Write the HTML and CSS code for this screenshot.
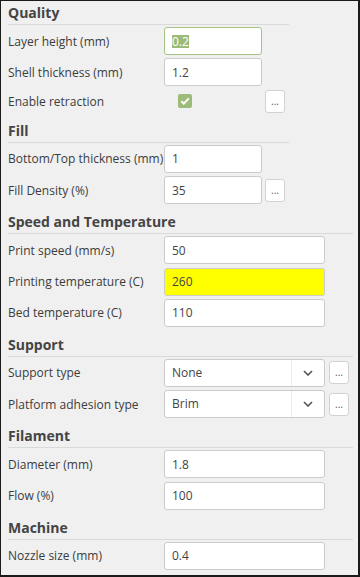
FILE: index.html
```html
<!DOCTYPE html>
<html lang="en">
<head>
    <meta charset="UTF-8">
    <title>Print settings</title>
    <link rel="stylesheet" href="styles.css">
</head>
<body>
    <div class="panel">
        <section class="group narrow">
            <h3>Quality</h3>
            <div class="rows">
                <div class="row">
                    <label>Layer height (mm)</label>
                    <div class="field focused"><span class="selected">0.2</span></div>
                </div>
                <div class="row">
                    <label>Shell thickness (mm)</label>
                    <input class="field" type="text" value="1.2">
                </div>
                <div class="row short">
                    <label>Enable retraction</label>
                    <div class="check">
                        <svg width="10" height="8" viewBox="0 0 10 8"><path d="M1.2 4.2l2.6 2.4L8.8 1.4" fill="none" stroke="#fff" stroke-width="2"/></svg>
                    </div>
                    <button class="more">...</button>
                </div>
            </div>
        </section>

        <section class="group narrow">
            <h3>Fill</h3>
            <div class="rows">
                <div class="row">
                    <label>Bottom/Top thickness (mm)</label>
                    <input class="field" type="text" value="1">
                </div>
                <div class="row">
                    <label>Fill Density (%)</label>
                    <input class="field" type="text" value="35">
                    <button class="more">...</button>
                </div>
            </div>
        </section>

        <section class="group wide">
            <h3>Speed and Temperature</h3>
            <div class="rows">
                <div class="row">
                    <label>Print speed (mm/s)</label>
                    <input class="field" type="text" value="50">
                </div>
                <div class="row">
                    <label>Printing temperature (C)</label>
                    <input class="field warn" type="text" value="260">
                </div>
                <div class="row">
                    <label>Bed temperature (C)</label>
                    <input class="field" type="text" value="110">
                </div>
            </div>
        </section>

        <section class="group wide">
            <h3>Support</h3>
            <div class="rows">
                <div class="row">
                    <label>Support type</label>
                    <div class="select">
                        <span class="select-value">None</span>
                        <span class="select-arrow"><svg width="10" height="6" viewBox="0 0 10 6"><path d="M1 1l4 4 4-4" fill="none" stroke="#555" stroke-width="1.6"/></svg></span>
                    </div>
                    <button class="more">...</button>
                </div>
                <div class="row">
                    <label>Platform adhesion type</label>
                    <div class="select">
                        <span class="select-value">Brim</span>
                        <span class="select-arrow"><svg width="10" height="6" viewBox="0 0 10 6"><path d="M1 1l4 4 4-4" fill="none" stroke="#555" stroke-width="1.6"/></svg></span>
                    </div>
                    <button class="more">...</button>
                </div>
            </div>
        </section>

        <section class="group wide">
            <h3>Filament</h3>
            <div class="rows">
                <div class="row">
                    <label>Diameter (mm)</label>
                    <input class="field" type="text" value="1.8">
                </div>
                <div class="row">
                    <label>Flow (%)</label>
                    <input class="field" type="text" value="100">
                </div>
            </div>
        </section>

        <section class="group wide">
            <h3>Machine</h3>
            <div class="rows">
                <div class="row">
                    <label>Nozzle size (mm)</label>
                    <input class="field" type="text" value="0.4">
                </div>
            </div>
        </section>
    </div>
</body>
</html>
```

FILE: styles.css
```css
body {
    margin: 0;
    background: #f0f0f0;
    font-family: "Open Sans", sans-serif;
    color: #3c3c3c;
}

.panel {
    height: 577px;
    box-sizing: border-box;
    border: 1px solid #1a1a1a;
    border-right-width: 2px;
    border-bottom-width: 2px;
    padding: 2px 0 0 7px;
}

h3 {
    margin: 8px 0 0;
    padding-bottom: 1px;
    font-size: 14px;
    line-height: 20px;
    font-weight: 700;
    color: #444;
    border-bottom: 1px solid #d9d9d9;
}

.group:first-child h3 {
    margin-top: 0;
}

.narrow h3 {
    width: 281px;
}

.wide h3 {
    width: 345px;
}

.rows {
    display: flex;
    flex-direction: column;
    gap: 3.4px;
    margin-top: 2px;
}

.row {
    display: grid;
    grid-template-columns: 153px 98px 20px;
    column-gap: 3px;
    align-items: center;
}

.wide .row {
    grid-template-columns: 152px 161px 20px;
    column-gap: 4px;
}

label {
    font-size: 12px;
    white-space: nowrap;
}

.field {
    width: 100%;
    height: 28px;
    box-sizing: border-box;
    margin: 0;
    padding: 0 7px;
    border: 1px solid #cbcbcb;
    border-radius: 3px;
    background: #fff;
    font-family: "Open Sans", sans-serif;
    font-size: 12px;
    color: #444;
    outline: none;
}

.field.warn {
    background: #ffff00;
}

.field.focused {
    display: flex;
    align-items: center;
    border-color: #a3c386;
}

.selected {
    background: #9cbb78;
    color: #fff;
    line-height: 13px;
}

.check {
    width: 14px;
    height: 14px;
    margin-left: 14px;
    border-radius: 2px;
    background: #9cbb78;
    display: flex;
    align-items: center;
    justify-content: center;
}

.more {
    width: 20px;
    height: 23px;
    padding: 0;
    border: 1px solid #d2d2d2;
    border-radius: 3px;
    background: #fff;
    color: #555;
    font-family: "Open Sans", sans-serif;
    font-size: 10px;
    line-height: 21px;
}

.select {
    display: flex;
    height: 28px;
    box-sizing: border-box;
    border: 1px solid #cbcbcb;
    border-radius: 3px;
    background: #fff;
    font-size: 12px;
    color: #444;
}

.select-value {
    flex: 1;
    padding-left: 7px;
    line-height: 26px;
}

.select-arrow {
    width: 32px;
    border-left: 1px solid #ebebeb;
    display: flex;
    align-items: center;
    justify-content: center;
}
```
